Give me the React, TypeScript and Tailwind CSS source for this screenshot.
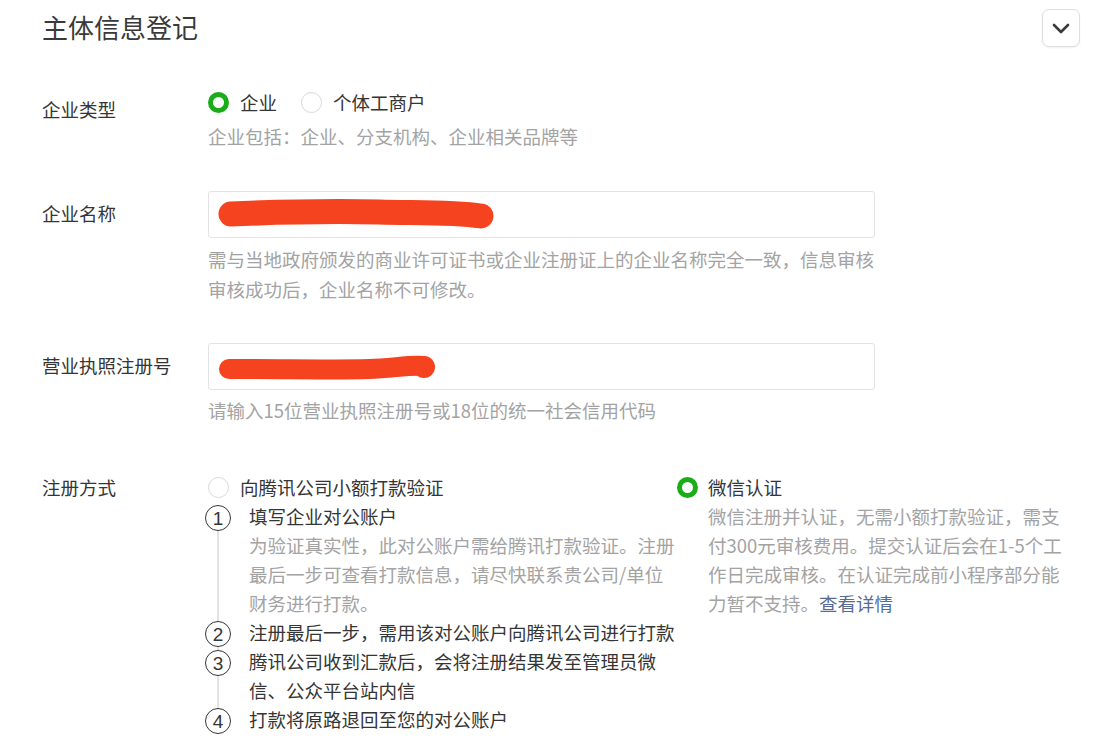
import { ReactNode } from 'react';

const steps = [
    {
        title: '填写企业对公账户',
        desc: '为验证真实性，此对公账户需给腾讯打款验证。注册最后一步可查看打款信息，请尽快联系贵公司/单位财务进行打款。',
    },
    { title: '注册最后一步，需用该对公账户向腾讯公司进行打款' },
    { title: '腾讯公司收到汇款后，会将注册结果发至管理员微信、公众平台站内信' },
    { title: '打款将原路退回至您的对公账户' },
];

const Radio = ({ checked }: { checked?: boolean }) =>
    checked ? (
        <span className="box-border block h-[21px] w-[21px] shrink-0 rounded-full border-[5px] border-[#1aad19] bg-white" />
    ) : (
        <span className="box-border block h-[21px] w-[21px] shrink-0 rounded-full border border-[#d9d9d9] bg-white" />
    );

const Row = ({
    label,
    children,
    className,
    labelClassName = 'pt-[7px]',
}: {
    label: string;
    children: ReactNode;
    className?: string;
    labelClassName?: string;
}) => (
    <div className={`grid grid-cols-[166px_668px] ${className ?? ''}`}>
        <div className={`leading-[30px] text-[#353535] ${labelClassName}`}>{label}</div>
        <div>{children}</div>
    </div>
);

// red marker strokes hiding the real values
const Scribble = ({ variant }: { variant: 1 | 2 }) => (
    <svg className="absolute left-0 top-0" width="300" height="46" viewBox="0 0 300 46">
        {variant === 1 ? (
            <path
                d="M22 22 C70 20 120 19 170 20 C210 21 245 20 272 24"
                fill="none"
                stroke="#f5421f"
                strokeWidth="25"
                strokeLinecap="round"
            />
        ) : (
            <>
                <path
                    d="M20 25 C80 25 130 26 160 25 C185 24 200 21 214 22"
                    fill="none"
                    stroke="#f5421f"
                    strokeWidth="20"
                    strokeLinecap="round"
                />
                <circle cx="215" cy="23" r="11" fill="#f5421f" />
            </>
        )}
    </svg>
);

const App = () => {
    return (
        <div className="h-[752px] w-[1096px] overflow-hidden bg-white font-['Noto_Sans_CJK_SC','Noto_Sans',sans-serif] text-[18.5px] text-[#353535]">
            <header className="flex items-start justify-between pl-[42px] pr-[16px] pt-[9px]">
                <h1 className="text-[26px] font-normal leading-[36px] text-[#3a3a3a]">主体信息登记</h1>
                <button className="flex h-[38px] w-[38px] items-center justify-center rounded-[7px] border border-[#dedede] bg-white shadow-[0_1px_2px_rgba(0,0,0,0.06)]">
                    <svg width="18" height="12" viewBox="0 0 18 12">
                        <path
                            d="M2 3 L9 10 L16 3"
                            fill="none"
                            stroke="#3a3a3a"
                            strokeWidth="2.6"
                            strokeLinecap="round"
                            strokeLinejoin="round"
                        />
                    </svg>
                </button>
            </header>

            <div className="px-[42px]">
                <Row label="企业类型" className="mt-[40px]">
                    <div className="flex items-center gap-[24px] leading-[30px]">
                        <label className="flex items-center gap-[11px]">
                            <Radio checked />
                            <span>企业</span>
                        </label>
                        <label className="flex items-center gap-[11px]">
                            <Radio />
                            <span>个体工商户</span>
                        </label>
                    </div>
                    <p className="mt-[4px] leading-[30px] text-[#a3a3a3]">企业包括：企业、分支机构、企业相关品牌等</p>
                </Row>

                <Row label="企业名称" className="mt-[40px]">
                    <div className="relative h-[47px] w-[667px] rounded-[3px] border border-[#e3e3e3] bg-white">
                        <Scribble variant={1} />
                    </div>
                    <p className="mt-[6px] leading-[30px] text-[#a3a3a3]">
                        需与当地政府颁发的商业许可证书或企业注册证上的企业名称完全一致，信息审核审核成功后，企业名称不可修改。
                    </p>
                </Row>

                <Row label="营业执照注册号" className="mt-[39px]">
                    <div className="relative h-[47px] w-[667px] rounded-[3px] border border-[#e3e3e3] bg-white">
                        <Scribble variant={2} />
                    </div>
                    <p className="mt-[5px] leading-[30px] text-[#a3a3a3]">请输入15位营业执照注册号或18位的统一社会信用代码</p>
                </Row>

                <Row label="注册方式" className="mt-[47px]" labelClassName="">
                    <div className="flex">
                        <div className="w-[469px]">
                            <label className="flex items-center gap-[11px] leading-[30px]">
                                <Radio />
                                <span>向腾讯公司小额打款验证</span>
                            </label>
                            <ol className="relative -ml-[3px]">
                                <span className="absolute bottom-[16px] left-[12px] top-[16px] w-[2px] bg-[#e2e2e2]" />
                                {steps.map((step, i) => (
                                    <li key={i} className="relative flex leading-[29px]">
                                        <div className="w-[44px] shrink-0 pt-[3px]">
                                            <span className="flex h-[26px] w-[26px] items-center justify-center rounded-full border-[1.5px] border-[#353535] bg-white font-['Liberation_Sans',sans-serif] text-[19px] leading-none text-[#353535]">
                                                {i + 1}
                                            </span>
                                        </div>
                                        <div className="w-[428px]">
                                            <div>{step.title}</div>
                                            {step.desc && <div className="text-[#a3a3a3]">{step.desc}</div>}
                                        </div>
                                    </li>
                                ))}
                            </ol>
                        </div>
                        <div>
                            <label className="flex items-center gap-[10px] leading-[30px]">
                                <Radio checked />
                                <span>微信认证</span>
                            </label>
                            <p className="w-[389px] pl-[31px] leading-[29px] text-[#a3a3a3]">
                                微信注册并认证，无需小额打款验证，需支付300元审核费用。提交认证后会在1-5个工作日完成审核。在认证完成前小程序部分能力暂不支持。
                                <span className="text-[#576b95]">查看详情</span>
                            </p>
                        </div>
                    </div>
                </Row>
            </div>
        </div>
    );
};

export default App;
